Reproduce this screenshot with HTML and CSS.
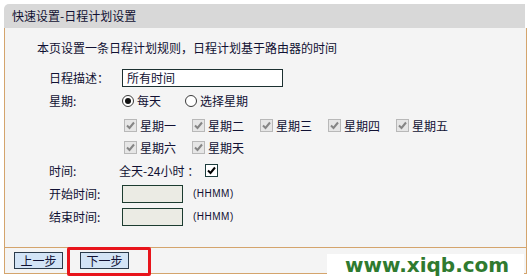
FILE: index.html
```html
<!DOCTYPE html>
<html lang="zh-CN">
<head>
    <meta charset="UTF-8">
    <title>快速设置-日程计划设置</title>
    <link rel="stylesheet" href="styles.css">
</head>
<body>

    <div class="panel">
        <div class="title">快速设置-日程计划设置</div>

        <div class="content">
            <p class="intro">本页设置一条日程计划规则，日程计划基于路由器的时间</p>

            <div class="form">
                <div class="row">
                    <span class="label">日程描述：</span>
                    <span class="text-input">所有时间</span>
                </div>

                <div class="row">
                    <span class="label">星期:</span>
                    <span class="opt"><span class="radio on"></span>每天</span>
                    <span class="opt"><span class="radio"></span>选择星期</span>
                </div>

                <div class="days">
                    <span class="day"><span class="cb off"><svg viewBox="0 0 11 11"><path d="M2 5.5 L4.5 8 L9 2.5"/></svg></span>星期一</span>
                    <span class="day"><span class="cb off"><svg viewBox="0 0 11 11"><path d="M2 5.5 L4.5 8 L9 2.5"/></svg></span>星期二</span>
                    <span class="day"><span class="cb off"><svg viewBox="0 0 11 11"><path d="M2 5.5 L4.5 8 L9 2.5"/></svg></span>星期三</span>
                    <span class="day"><span class="cb off"><svg viewBox="0 0 11 11"><path d="M2 5.5 L4.5 8 L9 2.5"/></svg></span>星期四</span>
                    <span class="day"><span class="cb off"><svg viewBox="0 0 11 11"><path d="M2 5.5 L4.5 8 L9 2.5"/></svg></span>星期五</span>
                    <span class="day"><span class="cb off"><svg viewBox="0 0 11 11"><path d="M2 5.5 L4.5 8 L9 2.5"/></svg></span>星期六</span>
                    <span class="day"><span class="cb off"><svg viewBox="0 0 11 11"><path d="M2 5.5 L4.5 8 L9 2.5"/></svg></span>星期天</span>
                </div>

                <div class="row time-row">
                    <span class="label">时间:</span>
                    <span class="allday">全天-24小时 ：</span>
                    <span class="cb"><svg viewBox="0 0 11 11"><path d="M2 5.5 L4.5 8 L9 2.5"/></svg></span>
                </div>

                <div class="row">
                    <span class="label">开始时间:</span>
                    <span class="time-input"></span>
                    <span class="hint">(HHMM)</span>
                </div>

                <div class="row">
                    <span class="label">结束时间:</span>
                    <span class="time-input"></span>
                    <span class="hint">(HHMM)</span>
                </div>
            </div>
        </div>

        <div class="bar">
            <button>上一步</button>
            <button>下一步</button>
        </div>
    </div>

    <!-- overlays on the screenshot -->
    <div class="highlight"></div>
    <div class="watermark">www.xiqb.com</div>

</body>
</html>
```

FILE: styles.css
```css
body {
    margin: 0;
    padding: 4px 2px 0 4px;
    background: #fff;
    color: #111133;
    font-family: "Noto Sans CJK SC", "DejaVu Sans", sans-serif;
    font-size: 12px;
}
.panel {
    width: 523px;
}
.title {
    height: 24px;
    line-height: 24px;
    margin-right: 2px;
    padding-left: 8px;
    background: #d8d8d8;
    border-top-left-radius: 5px;
}
.content {
    box-sizing: border-box;
    height: 219px;
    padding-top: 10px;
    background: #f4f4f4;
    border-left: 1px solid #d4a46c;
    border-right: 1px solid #d4a46c;
}
.intro {
    margin: 0;
    padding-left: 32px;
    height: 20px;
    line-height: 20px;
}
.form {
    margin-top: 8px;
    padding-left: 44px;
}
.row {
    display: flex;
    align-items: center;
    height: 23px;
}
.label {
    width: 73px;
    flex: none;
}
.text-input {
    box-sizing: border-box;
    width: 161px;
    height: 18px;
    line-height: 16px;
    padding-left: 4px;
    background: #fff;
    border: 1px solid #1c3030;
}
.opt {
    display: flex;
    align-items: center;
    gap: 3px;
    margin-right: 24px;
}
.opt:first-of-type {
    margin-left: 3px;
}
.radio {
    box-sizing: border-box;
    width: 12px;
    height: 12px;
    border: 1px solid #3a3a3a;
    border-radius: 50%;
    background: #fff;
    display: flex;
    align-items: center;
    justify-content: center;
}
.radio.on::after {
    content: "";
    width: 6px;
    height: 6px;
    border-radius: 50%;
    background: #111;
}
.days {
    display: grid;
    grid-template-columns: repeat(5, 68px);
    grid-auto-rows: 22px;
    margin: 2px 0 0 75px;
}
.day {
    display: flex;
    align-items: center;
    gap: 3px;
}
.cb {
    box-sizing: border-box;
    width: 13px;
    height: 13px;
    background: #fff;
    border: 1px solid #1c3c3c;
    display: flex;
    align-items: center;
    justify-content: center;
}
.cb svg {
    width: 11px;
    height: 11px;
    fill: none;
    stroke: #000;
    stroke-width: 2;
}
.cb.off {
    background: #e6e6e6;
    border-color: #b8b8b8;
}
.cb.off svg {
    stroke: #858585;
}
.time-row {
    height: 24px;
}
.allday {
    margin-left: -3px;
    margin-right: 6px;
}
.time-input {
    box-sizing: border-box;
    width: 61px;
    height: 18px;
    background: #ebebe4;
    border: 1px solid #1c3c30;
}
.hint {
    margin-left: 10px;
    font-family: "Liberation Sans", sans-serif;
    font-size: 10px;
    letter-spacing: 0.5px;
}
.bar {
    display: flex;
    gap: 17px;
    height: 25px;
    box-sizing: border-box;
    padding: 4px 0 0 9px;
    background: #f4f4f4;
    border: 1px solid #d4a46c;
    border-bottom-width: 1px;
    height: 27px;
}
button {
    width: 49px;
    height: 17px;
    padding: 0;
    font-family: inherit;
    font-size: 12px;
    line-height: 15px;
    color: #111133;
    background: #d3e4f6;
    border: 1px solid #2b3b4b;
    border-radius: 0;
}
.highlight {
    position: absolute;
    left: 67px;
    top: 247px;
    width: 84px;
    height: 29px;
    box-sizing: border-box;
    border: 3px solid #e8141b;
    border-radius: 2px;
}
.watermark {
    position: absolute;
    left: 327px;
    top: 254px;
    width: 197px;
    height: 23px;
    box-sizing: border-box;
    padding-left: 18px;
    background: #fff;
    color: #2f7a2f;
    font-family: "DejaVu Sans", sans-serif;
    font-weight: bold;
    font-size: 20px;
    line-height: 22px;
}
```
